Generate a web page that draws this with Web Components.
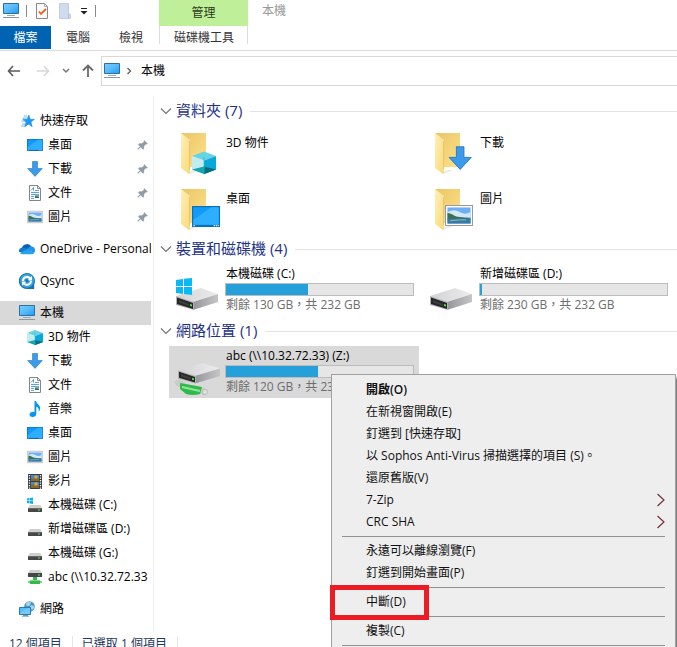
<!DOCTYPE html>
<html lang="zh-Hant">
<head>
<meta charset="utf-8">
<meta name="viewport" content="width=device-width, initial-scale=1">
<title>本機</title>
<style>
  body {
    margin: 0;
    background: #fff;
    color: #000;
    font: 12px/16px "Open Sans", "Noto Sans CJK TC", sans-serif;
  }
</style>
</head>
<body>
<explorer-window>
  <window-ribbon slot="ribbon">
    <span slot="context">管理</span>
    <span slot="title">本機</span>
    <ribbon-tab slot="tabs" file>檔案</ribbon-tab>
    <ribbon-tab slot="tabs">電腦</ribbon-tab>
    <ribbon-tab slot="tabs">檢視</ribbon-tab>
    <ribbon-tab slot="context-tab">磁碟機工具</ribbon-tab>
  </window-ribbon>

  <address-bar slot="address">本機</address-bar>

  <nav-tree slot="tree">
    <tree-group>
      <tree-item icon="star">快速存取</tree-item>
      <tree-item icon="desktop" child pinned>桌面</tree-item>
      <tree-item icon="download" child pinned>下載</tree-item>
      <tree-item icon="document" child pinned>文件</tree-item>
      <tree-item icon="picture" child pinned>圖片</tree-item>
    </tree-group>
    <tree-group>
      <tree-item icon="cloud">OneDrive - Personal</tree-item>
    </tree-group>
    <tree-group>
      <tree-item icon="qsync">Qsync</tree-item>
    </tree-group>
    <tree-group>
      <tree-item icon="pc" selected>本機</tree-item>
      <tree-item icon="cube" child>3D 物件</tree-item>
      <tree-item icon="download" child>下載</tree-item>
      <tree-item icon="document" child>文件</tree-item>
      <tree-item icon="music" child>音樂</tree-item>
      <tree-item icon="desktop" child>桌面</tree-item>
      <tree-item icon="picture" child>圖片</tree-item>
      <tree-item icon="video" child>影片</tree-item>
      <tree-item icon="disk-system" child>本機磁碟 (C:)</tree-item>
      <tree-item icon="disk" child>新增磁碟區 (D:)</tree-item>
      <tree-item icon="disk" child>本機磁碟 (G:)</tree-item>
      <tree-item icon="disk-network" child>abc (\\10.32.72.33</tree-item>
    </tree-group>
    <tree-group>
      <tree-item icon="network">網路</tree-item>
    </tree-group>
  </nav-tree>

  <tile-group>
    <span slot="heading">資料夾 (7)</span>
    <folder-tile icon="folder-cube">3D 物件</folder-tile>
    <folder-tile icon="folder-download">下載</folder-tile>
    <folder-tile icon="folder-desktop">桌面</folder-tile>
    <folder-tile icon="folder-picture">圖片</folder-tile>
  </tile-group>
  <tile-group>
    <span slot="heading">裝置和磁碟機 (4)</span>
    <drive-tile icon="drive-system" used="44">
      本機磁碟 (C:)
      <span slot="space">剩餘 130 GB，共 232 GB</span>
    </drive-tile>
    <drive-tile icon="drive" used="1">
      新增磁碟區 (D:)
      <span slot="space">剩餘 230 GB，共 232 GB</span>
    </drive-tile>
  </tile-group>
  <tile-group>
    <span slot="heading">網路位置 (1)</span>
    <drive-tile icon="drive-network" used="49" selected>
      abc (\\10.32.72.33) (Z:)
      <span slot="space">剩餘 120 GB，共 232 GB</span>
    </drive-tile>
  </tile-group>

  <status-bar slot="status">
    <span>12 個項目</span>
    <span>已選取 1 個項目</span>
  </status-bar>

  <context-menu slot="menu">
    <menu-entry default>開啟(O)</menu-entry>
    <menu-entry>在新視窗開啟(E)</menu-entry>
    <menu-entry>釘選到 [快速存取]</menu-entry>
    <menu-entry>以 Sophos Anti-Virus 掃描選擇的項目 (S)。</menu-entry>
    <menu-entry>還原舊版(V)</menu-entry>
    <menu-entry submenu>7-Zip</menu-entry>
    <menu-entry submenu>CRC SHA</menu-entry>
    <menu-divider></menu-divider>
    <menu-entry>永遠可以離線瀏覽(F)</menu-entry>
    <menu-entry>釘選到開始畫面(P)</menu-entry>
    <menu-divider></menu-divider>
    <menu-entry marked>中斷(D)</menu-entry>
    <menu-divider></menu-divider>
    <menu-entry>複製(C)</menu-entry>
    <menu-divider></menu-divider>
  </context-menu>
</explorer-window>

<script>
// Parts that several of the large icons share
const FOLDER = `
  <defs>
    <linearGradient id="back" x2="1" y2="1"><stop stop-color="#e9c565"/><stop offset="1" stop-color="#ffe28c"/></linearGradient>
    <linearGradient id="front" x2="1" y2="1"><stop stop-color="#fff0b8"/><stop offset="1" stop-color="#f9d978"/></linearGradient>
  </defs>
  <path d="M8 40l5-3h6l-9 4z" fill="#ddd" opacity=".6"/>
  <path d="M1 0h25v34H9z" fill="url(#back)"/>
  <path d="M1 0l9 7v33l-1 1-8-6z" fill="url(#front)"/>
  <path d="M9.500 8v28" stroke="#e8c66b" fill="none"/>`

const CUBE = `
  <path d="M0 4l8-3 8 3-8 3z" fill="#67d3e4"/>
  <path d="M0 4l8 3v9l-8-3z" fill="#c1edf0"/>
  <path d="M16 4l-8 3v9l8-3z" fill="#08a9d9"/>
  <path d="M0 13l8-2 8 2-8 3z" fill="#14a6ad"/>
  <path d="M8 11v5l8-3z" fill="#006d80"/>
  <path d="M8 4.500v11" stroke="#22bdd4" stroke-width=".5"/>`

const ARROW = '<path d="M5.500 .5h5v7h4.800L8 15.400.7 7.500h4.800z" fill="#3b9aea" stroke="#2878bd" stroke-width=".6"/>'

const SCREEN = `
  <path d="M0 2h16v12H0z" fill="#0a70bd"/>
  <path d="M.7 2.700h14.600v10H.7z" fill="#109bfb"/>
  <path d="M.7 10L11 2.700h4.300v10H.7z" fill="#2eaeff"/>
  <path d="M.8 13.200h.8m10.800 0h.7m.5 0h.7m.4 0h.6" stroke="#e5f5ff" stroke-width=".6"/>`

const PHOTO = `
  <path d="M.3 2.300h15.400v11.400H.3z" fill="#fff" stroke="#999" stroke-width=".6"/>
  <path d="M1.400 3.400h13.200v9.200H1.400z" fill="#6eaef5"/>
  <path d="M1.400 6q4-2 7 0t6.200 0v3H1.400z" fill="#d2e8f2"/>
  <path d="M1.400 6.500c3 .3 3.500 1.700 6 2.200l7.200 1v.6H1.400z" fill="#397154"/>
  <path d="M1.400 9.800h13.200v2.800H1.400z" fill="#397aa5"/>
  <path d="M3 11l5-.5h4" stroke="#9bc3d1" stroke-width=".5" fill="none"/>`

const DRIVE = `
  <defs>
    <linearGradient id="top" x2="1"><stop stop-color="#d3d3d5"/><stop offset="1" stop-color="#ececee"/></linearGradient>
    <linearGradient id="side" x2="1"><stop stop-color="#96969a"/><stop offset="1" stop-color="#c5c5c8"/></linearGradient>
  </defs>
  <path d="M0 23l25-8 17 6-25 8z" fill="url(#top)"/>
  <path d="M42 21v8l-25 8v-8z" fill="url(#side)"/>
  <path d="M0 23l18 6v8L0 32z" fill="#b2b2b5"/>
  <path d="M1 24.500l16 5.500v6L1 31z" fill="#242627"/>
  <path d="M3 27l10 4v2L3 29.500z" fill="#3b403d"/>
  <path d="M14 31l2 .6v2l-2-.6z" fill="#4ae64b"/>`

const SMALL_DISK = `
  <path d="M3 8h10l2 3H1z" fill="#cfcfd0"/>
  <path d="M1 11h14v4H1z" fill="#454749"/>
  <path d="M1 11.500h14" stroke="#77797a" stroke-width=".7"/>
  <path d="M11 13h2" stroke="#55ed58" stroke-width="1.200"/>`

const ICONS = {
  pc: ['0 0 16 16', `
    <defs><linearGradient id="glass" x2="1" y2="1"><stop stop-color="#78ceff"/><stop offset=".5" stop-color="#55bbfb"/><stop offset="1" stop-color="#2098f4"/></linearGradient></defs>
    <path d="M.5 .5h15v10H.5z" fill="url(#glass)" stroke="#316f99"/>
    <path d="M4 12.500h8" stroke="#8eaec4"/>
    <path d="M0 14.500h16" stroke="#8599aa"/>`],
  checked: ['0 0 16 16', `
    <path d="M2.500 .5h8l3 3v12h-11z" fill="#fafafa" stroke="#8a8a8a"/>
    <path d="M10.500 .5v3h3" fill="none" stroke="#aaa"/>
    <path d="M5 8.500l2 2.500 5-5" fill="none" stroke="#e76227" stroke-width="1.800"/>`],
  blank: ['0 0 16 16', `
    <path d="M2.500 .5h9v10l2 1v4h-11z" fill="#cfdcef" stroke="#c1cee0"/>
    <path d="M11.500 10.500v5" stroke="#aebfd6"/>`],
  star: ['0 0 16 16', `
    <path d="M9.800 2l1.400 4.200h4.300L12 9l1.200 4.700-3.600-2.500-4 2.600L7 9.200 3.700 6.300l4.300-.1z" fill="#1d9af0" stroke="#1d83ce" stroke-width=".5"/>
    <path d="M5 3h3M3.500 5h4M2.500 8h3M3 11h3M2 13h3.500" stroke="#46b0f6" stroke-width=".8"/>`],
  desktop: ['0 0 16 16', SCREEN],
  download: ['0 0 16 16', ARROW],
  document: ['0 0 16 16', `
    <path d="M2.500 .5h8l3 3v12h-11z" fill="#fff" stroke="#858585"/>
    <path d="M10.500 .5v3h3" fill="none" stroke="#858585"/>
    <path d="M4 5.500L6.500 2.500v3M8 5.500h4M4 7.500h8M4 9.500h4M4 11.500h3M4 13.500h3" fill="none" stroke="#278fc7" stroke-width=".8"/>
    <path d="M8 9h4v4H8z" fill="#71afd2"/><path d="M8 11l4 1v1H8z" fill="#396e59"/>`],
  picture: ['0 0 16 16', PHOTO],
  cloud: ['0 0 16 16', `
    <path d="M3 7a5 4.500 0 0 1 9.500-1.300L12 10 6 9z" fill="#0862b8"/>
    <path d="M0 10.500A3.500 3.500 0 0 1 3.500 6.500q2.500-.2 4 1.200L12 11H0z" fill="#1479d1"/>
    <path d="M8 8q2-3 4.500-2.500A3.800 3.800 0 0 1 16 9.500q0 1.500-1 2.500z" fill="#2493e5"/>
    <path d="M.8 12L8.500 8l6.800 4q-1 1.200-2.500 1.200h-9Q2 13.200.8 12z" fill="#25a2ed"/>`],
  qsync: ['0 0 16 16', `
    <path d="M8 0a8 8 0 1 0 1 15.900h6.200v-4.500A8 8 0 0 0 8 0z" fill="#1675ae"/>
    <circle cx="8" cy="7.800" r="7" fill="#3aa0dd"/>
    <path d="M3 8a5 5 0 0 1 8.500-3.800L13 3v4.500H8.500l1.500-1.600A2.900 2.900 0 0 0 5 8z" fill="#fff"/>
    <path d="M13 8a5 5 0 0 1-8.500 3.500L3 13V8.500h4.500L6 10a3 3 0 0 0 5-2z" fill="#e8f7ff"/>
    <circle cx="8" cy="7.800" r="1.600" fill="#1976ad"/>`],
  cube: ['0 0 16 16', CUBE],
  music: ['0 0 16 16', `
    <path d="M7.500 0h1.600c.3 3 4.300 4 4.100 7.300 0 1.500-.7 2.500-1.600 3.300.7-3-.5-4.300-2.300-4.900V13c0 2-1.800 3-3.800 3S2.500 15 2.500 13.500s2-3 5-2.600z" fill="#0798ee"/>`],
  video: ['0 0 16 16', `
    <path d="M1 1h14v15H1z" fill="#383b42"/>
    <path d="M4 2h8v6H4zm0 7h8v6H4z" fill="#4388d1"/>
    <path d="M4 5l3 1 2-3 3 3v2H4zm0 7l4-1 4 2v2H4z" fill="#876c27"/>
    <circle cx="9" cy="4" r="1.700" fill="#e2a62d"/><circle cx="9" cy="11" r="1.700" fill="#dcac36"/>
    <path d="M2.500 2v14m11-14v14" stroke="#fff" stroke-width="1.300" stroke-dasharray="1.300 1.200"/>`],
  disk: ['0 0 16 16', SMALL_DISK],
  'disk-system': ['0 0 16 16', `${SMALL_DISK}
    <path d="M0 1.500l2.500-.4v2.400H0zm3-.5L6 .5v3H3zM0 4h2.500v2.400L0 6zm3 0h3v3l-3-.5z" fill="#09b2ef"/>`],
  'disk-network': ['0 0 16 16', `
    <path d="M3 1h10l2 3H1z" fill="#cfcfd0"/>
    <path d="M1 4h14v4H1z" fill="#454749"/>
    <path d="M11 6h2" stroke="#55ed58" stroke-width="1.200"/>
    <path d="M6 8h4v3h3v4H3v-4h3z" fill="#36b84d"/>
    <path d="M1 12h2v2H1zm12 0h2v2h-2z" fill="#7ed487"/>
    <path d="M3 11.500h10" stroke="#77de84"/>`],
  network: ['0 0 16 16', `
    <circle cx="10.500" cy="5.500" r="5.300" fill="#4a96c5"/>
    <path d="M7 2q3-2 5-.7l-1 3-2 1-2-1zM12 4l3 1v2l-2 2-2-3z" fill="#a6d5e8"/>
    <path d="M.5 6.500h11v7H.5z" fill="#56bdf8" stroke="#277db2"/>
    <path d="M1 12l8-5h2v6H1z" fill="#86d2ff" opacity=".6"/>
    <path d="M4 14.500h5" stroke="#7595a7"/><path d="M3 15.500h7" stroke="#a5b9c4"/>`],
  pin: ['0 0 12 12', `
    <path d="M7.300 1.500l3.200 3.200-1.200.5-.5-.1-2 2.200.1 2.200-1 .9-2.300-2.300L1 10.500l-.5-.5 2.600-2.600L1.300 5.500l.9-1 2.100.2L7 3.200l-.2-1z" fill="#8e9aa4" stroke="#8e9aa4" stroke-width=".4"/>`],
  back: ['0 0 14 14', '<path d="M13 7H1.500M6 2L1.500 7 6 12" fill="none" stroke="#5c5c5c" stroke-width="1.600"/>'],
  forward: ['0 0 14 14', '<path d="M1 7h11.500M8 2l4.500 5L8 12" fill="none" stroke="#d8d8d8" stroke-width="1.600"/>'],
  up: ['0 0 14 14', '<path d="M7 13V1.500M2 6.500l5-5 5 5" fill="none" stroke="#6a6a6a" stroke-width="1.800"/>'],
  recent: ['0 0 8 8', '<path d="M1 2l3 3 3-3" fill="none" stroke="#777" stroke-width="1.500"/>'],
  crumb: ['0 0 8 8', '<path d="M2.500 1l3 3-3 3" fill="none" stroke="#666" stroke-width="1.400"/>'],
  customize: ['0 0 8 8', '<path d="M1 1.500h6" stroke="#222"/><path d="M.5 4h7L4 7.500z" fill="#222"/>'],
  collapse: ['0 0 12 12', '<path d="M1 3.500l5 5 5-5" fill="none" stroke="#777" stroke-width="1.200"/>'],
  submenu: ['0 0 14 14', '<path d="M4.500 1l6.500 6-6.500 6" fill="none" stroke="#74303a" stroke-width="1.200"/>'],
  'folder-cube': ['0 0 46 44', `${FOLDER}<g transform="translate(12 17) scale(1.500)">${CUBE}</g>`],
  'folder-download': ['0 0 46 44', `${FOLDER}<g transform="translate(14 13) scale(1.520)">${ARROW}</g>`],
  'folder-desktop': ['0 0 46 44', `${FOLDER}<g transform="translate(12 13.500) scale(1.750)">${SCREEN}</g>`],
  'folder-picture': ['0 0 46 44', `${FOLDER}<g transform="translate(11 12.500) scale(1.750)">${PHOTO}</g>`],
  drive: ['0 0 46 44', DRIVE],
  'drive-system': ['0 0 46 44', `${DRIVE}
    <path d="M0 7l7-1v7H0zm8-1.200L16 5v8H8zM0 14h7v7l-7-1zm8 0h8v8l-8-1z" fill="#08b9f4"/>`],
  'drive-network': ['0 0 50 44', `
    <path d="M0 27l5-3 8 5 18 4 3 4-3 4-6-3-22-7z" fill="#c8ccc9"/>
    <path d="M6 28l22 4-2 7q-7 2-14 0l-6-5z" fill="#31b94a"/>
    <path d="M8 32l18 4" stroke="#8ce99a" stroke-width="2"/>
    <circle cx="31" cy="37" r="2.500" fill="#e0e2e0" stroke="#aaa" stroke-width=".6"/>
    <g transform="translate(4 -6) scale(1 .93)">${DRIVE}</g>`]
}

/**
 * Vector icon picked by name.
 *
 * @augments HTMLElement
 */
class FileIcon extends HTMLElement {
  constructor () {
    super()
    this.attachShadow({ mode: 'open' })
  }

  connectedCallback () {
    const [viewBox, shapes] = ICONS[this.getAttribute('name')]
    const [, , width, height] = viewBox.split(' ')
    this.shadowRoot.innerHTML = `
      <style>
        :host { display: block; flex: none; }
        svg { display: block; }
      </style>
      <svg viewBox="${viewBox}" width="${width}" height="${height}" aria-hidden="true">${shapes}</svg>
    `
  }
}

/**
 * Frame of the window: ribbon, address, tree beside the files, status.
 *
 * @augments HTMLElement
 */
class ExplorerWindow extends HTMLElement {
  constructor () {
    super()
    this.attachShadow({ mode: 'open' })
    this.shadowRoot.innerHTML = `
      <style>
        :host {
          display: block;
          position: relative;
          height: 100vh;
          overflow: hidden;
        }
        .panes {
          display: grid;
          grid-template-columns: 154px minmax(0, 1fr);
        }
        main {
          display: flex;
          flex-direction: column;
          gap: 4px;
          padding: 9px 0 0 6px;
        }
        slot[name="menu"] {
          display: block;
          position: absolute;
          top: 374px;
          left: 331px;
        }
      </style>
      <slot name="ribbon"></slot>
      <slot name="address"></slot>
      <div class="panes">
        <slot name="tree"></slot>
        <main><slot></slot></main>
      </div>
      <slot name="status"></slot>
      <slot name="menu"></slot>
    `
  }
}

/**
 * Quick access buttons, window title and ribbon tabs.
 *
 * @augments HTMLElement
 */
class WindowRibbon extends HTMLElement {
  constructor () {
    super()
    this.attachShadow({ mode: 'open' })
    this.shadowRoot.innerHTML = `
      <style>
        :host {
          display: grid;
          grid-template-columns: 159px 89px 1fr;
          grid-template-rows: 26px 24px;
          border-bottom: 1px solid #dadbdc;
        }
        .quick {
          display: flex;
          align-items: center;
          gap: 7px;
          padding: 0 3px 4px;
        }
        .quick i { width: 1px; height: 12px; background: #8a8a8a; }
        button { padding: 0; border: 0; background: none; }
        .context {
          display: grid;
          place-items: center;
          background: #c0ef9a;
          color: #2b3a22;
        }
        .title { padding: 3px 14px; color: #999; }
        .tabs { display: flex; gap: 1px; }
        .tools {
          display: grid;
          height: 18px;
          border: solid #dcdcdc;
          border-width: 0 1px;
        }
      </style>
      <div class="quick">
        <file-icon name="pc"></file-icon>
        <i></i>
        <button aria-label="內容"><file-icon name="checked"></file-icon></button>
        <button aria-label="新增資料夾"><file-icon name="blank"></file-icon></button>
        <button aria-label="自訂"><file-icon name="customize"></file-icon></button>
        <i></i>
      </div>
      <div class="context"><slot name="context"></slot></div>
      <div class="title"><slot name="title"></slot></div>
      <div class="tabs"><slot name="tabs"></slot></div>
      <div class="tools"><slot name="context-tab"></slot></div>
    `
  }
}

/**
 * One tab of the ribbon; the "file" attribute gives the blue one.
 *
 * @augments HTMLElement
 */
class RibbonTab extends HTMLElement {
  constructor () {
    super()
    this.attachShadow({ mode: 'open' })
    this.shadowRoot.innerHTML = `
      <style>
        :host { display: block; }
        button {
          width: 100%;
          height: 23px;
          padding: 0 14px;
          border: 0;
          background: none;
          color: #333;
          font: inherit;
          white-space: nowrap;
        }
        :host([file]) button { width: 51px; padding: 0; background: #0063b1; color: #fff; }
      </style>
      <button><slot></slot></button>
    `
  }
}

/**
 * History buttons and the path.
 *
 * @augments HTMLElement
 */
class AddressBar extends HTMLElement {
  constructor () {
    super()
    this.attachShadow({ mode: 'open' })
    this.shadowRoot.innerHTML = `
      <style>
        :host {
          display: grid;
          grid-template-columns: 101px 1fr;
          padding: 5px 0;
        }
        .history, .path { display: flex; align-items: center; }
        .history { justify-content: space-between; padding: 0 6px 0 7px; }
        .history button:nth-child(2) { padding: 0 0 0 4px; }
        .path {
          box-sizing: border-box;
          height: 30px;
          gap: 5px;
          padding-left: 2px;
          border: 1px solid #d9d9d9;
          border-right: 0;
        }
        button { padding: 0; border: 0; background: none; color: inherit; font: inherit; }
        .path button { padding: 0 3px; }
      </style>
      <div class="history">
        <button aria-label="上一頁"><file-icon name="back"></file-icon></button>
        <button aria-label="下一頁" disabled><file-icon name="forward"></file-icon></button>
        <button aria-label="最近的位置"><file-icon name="recent"></file-icon></button>
        <button aria-label="向上"><file-icon name="up"></file-icon></button>
      </div>
      <div class="path">
        <file-icon name="pc"></file-icon>
        <file-icon name="crumb"></file-icon>
        <button><slot></slot></button>
      </div>
    `
  }
}

/**
 * Navigation column.
 *
 * @augments HTMLElement
 */
class NavTree extends HTMLElement {
  constructor () {
    super()
    this.attachShadow({ mode: 'open' })
    this.shadowRoot.innerHTML = `
      <style>
        :host { display: block; padding: 5px 0 4px; }
        nav {
          display: flex;
          flex-direction: column;
          gap: 8px;
          padding: 13px 2px 11px 0;
          border-right: 1px solid #f0f0f0;
        }
      </style>
      <nav><slot></slot></nav>
    `
  }
}

/**
 * Root entry of the tree together with its children.
 *
 * @augments HTMLElement
 */
class TreeGroup extends HTMLElement {
  constructor () {
    super()
    this.attachShadow({ mode: 'open' })
    this.shadowRoot.innerHTML = `
      <style>
        :host { display: block; }
      </style>
      <slot></slot>
    `
  }
}

/**
 * Entry of the tree.
 *
 * @augments HTMLElement
 */
class TreeItem extends HTMLElement {
  constructor () {
    super()
    this.attachShadow({ mode: 'open' })
  }

  connectedCallback () {
    const pin = this.hasAttribute('pinned') ? '<file-icon name="pin"></file-icon>' : ''
    this.shadowRoot.innerHTML = `
      <style>
        :host { display: block; }
        a {
          display: flex;
          align-items: center;
          gap: 5px;
          height: 24px;
          padding-left: 19px;
          color: inherit;
          text-decoration: none;
        }
        :host([child]) a { padding-left: 27px; }
        :host([pinned]) a { padding-right: 2px; }
        :host([selected]) a { background: #d9d9d9; }
        span { flex: 1; overflow: hidden; white-space: nowrap; }
      </style>
      <a href="#">
        <file-icon name="${this.getAttribute('icon')}"></file-icon>
        <span><slot></slot></span>
        ${pin}
      </a>
    `
  }
}

/**
 * Collapsible heading with a grid of tiles under it.
 *
 * @augments HTMLElement
 */
class TileGroup extends HTMLElement {
  constructor () {
    super()
    this.attachShadow({ mode: 'open' })
    this.shadowRoot.innerHTML = `
      <style>
        :host { display: block; }
        button {
          display: flex;
          align-items: center;
          gap: 4px;
          width: 100%;
          height: 22px;
          padding: 0;
          border: 0;
          background: none;
          color: #1e3287;
          font: inherit;
          font-size: 15px;
        }
        span { padding-bottom: 2px; }
        hr { flex: 1; margin: 0 0 0 4px; border: 0; border-top: 1px solid #e2e2e2; }
        .tiles {
          display: grid;
          grid-template-columns: repeat(auto-fill, 250px);
          gap: 4px;
          padding: 4px 0 0 9px;
        }
      </style>
      <button>
        <file-icon name="collapse"></file-icon>
        <span><slot name="heading"></slot></span>
        <hr>
      </button>
      <div class="tiles"><slot></slot></div>
    `
  }
}

/**
 * Folder with a large icon.
 *
 * @augments HTMLElement
 */
class FolderTile extends HTMLElement {
  constructor () {
    super()
    this.attachShadow({ mode: 'open' })
  }

  connectedCallback () {
    this.shadowRoot.innerHTML = `
      <style>
        :host {
          display: grid;
          grid-template-columns: 46px 1fr;
          box-sizing: border-box;
          height: 52px;
          padding: 7px 0 0 11px;
        }
        span { padding-top: 2px; }
      </style>
      <file-icon name="${this.getAttribute('icon')}"></file-icon>
      <span><slot></slot></span>
    `
  }
}

/**
 * Drive with its capacity bar.
 *
 * @augments HTMLElement
 */
class DriveTile extends HTMLElement {
  constructor () {
    super()
    this.attachShadow({ mode: 'open' })
  }

  connectedCallback () {
    this.shadowRoot.innerHTML = `
      <style>
        :host {
          display: grid;
          grid-template-columns: 50px 189px;
          gap: 1px;
          box-sizing: border-box;
          height: 52px;
          padding: 2px 5px 0;
          white-space: nowrap;
        }
        :host([selected]) { background: #d9d9d9; }
        file-icon { justify-self: center; margin-top: 7px; }
        label, progress { display: block; }
        label { padding: 0 1px; height: 17px; }
        progress {
          appearance: none;
          box-sizing: border-box;
          width: 100%;
          height: 13px;
          border: 1px solid #bcbcbc;
          background: #e6e6e6;
        }
        progress::-webkit-progress-bar { background: #e6e6e6; }
        progress::-webkit-progress-value { background: #26a0da; }
        .space { padding: 1px 1px 0; color: #6d6d6d; }
      </style>
      <file-icon name="${this.getAttribute('icon')}"></file-icon>
      <div>
        <label for="used"><slot></slot></label>
        <progress id="used" max="100" value="${this.getAttribute('used')}"></progress>
        <div class="space"><slot name="space"></slot></div>
      </div>
    `
  }
}

/**
 * Counters under the panes.
 *
 * @augments HTMLElement
 */
class StatusBar extends HTMLElement {
  constructor () {
    super()
    this.attachShadow({ mode: 'open' })
    this.shadowRoot.innerHTML = `
      <style>
        :host { display: flex; color: #1e395b; }
        ::slotted(span) { padding: 0 10px 4px 9px; border-right: 1px solid #e6e6e6; }
      </style>
      <slot></slot>
    `
  }
}

/**
 * Context menu of the selected drive.
 *
 * @augments HTMLElement
 */
class ContextMenu extends HTMLElement {
  constructor () {
    super()
    this.attachShadow({ mode: 'open' })
    this.shadowRoot.innerHTML = `
      <style>
        :host {
          display: block;
          box-sizing: border-box;
          width: 345px;
          padding: 4px 0;
          border: 1px solid #a0a0a0;
          background: #eee;
          box-shadow: 4px 4px 3px rgba(0, 0, 0, .5);
        }
      </style>
      <slot></slot>
    `
  }
}

/**
 * Command of the context menu.
 *
 * @augments HTMLElement
 */
class MenuEntry extends HTMLElement {
  constructor () {
    super()
    this.attachShadow({ mode: 'open' })
  }

  connectedCallback () {
    const arrow = this.hasAttribute('submenu') ? '<file-icon name="submenu"></file-icon>' : ''
    this.shadowRoot.innerHTML = `
      <style>
        :host { display: block; position: relative; }
        button {
          display: flex;
          align-items: center;
          justify-content: space-between;
          width: 100%;
          height: 22px;
          padding: 0 8px 0 34px;
          border: 0;
          background: none;
          color: #111;
          font: inherit;
          white-space: nowrap;
        }
        :host([default]) button { font-weight: 600; }
        :host([marked])::after {
          content: "";
          position: absolute;
          z-index: 1;
          inset: -6px auto -7px -2px;
          box-sizing: border-box;
          width: 99px;
          border: 5px solid #ed1c24;
        }
      </style>
      <button><slot></slot>${arrow}</button>
    `
  }
}

/**
 * Line between groups of commands.
 *
 * @augments HTMLElement
 */
class MenuDivider extends HTMLElement {
  constructor () {
    super()
    this.attachShadow({ mode: 'open' })
    this.shadowRoot.innerHTML = `
      <style>
        :host { display: block; padding: 3px 10px; }
        hr { margin: 0; border: 0; border-top: 1px solid #919191; }
      </style>
      <hr>
    `
  }
}

customElements.define('file-icon', FileIcon)
customElements.define('explorer-window', ExplorerWindow)
customElements.define('window-ribbon', WindowRibbon)
customElements.define('ribbon-tab', RibbonTab)
customElements.define('address-bar', AddressBar)
customElements.define('nav-tree', NavTree)
customElements.define('tree-group', TreeGroup)
customElements.define('tree-item', TreeItem)
customElements.define('tile-group', TileGroup)
customElements.define('folder-tile', FolderTile)
customElements.define('drive-tile', DriveTile)
customElements.define('status-bar', StatusBar)
customElements.define('context-menu', ContextMenu)
customElements.define('menu-entry', MenuEntry)
customElements.define('menu-divider', MenuDivider)
</script>
</body>
</html>
